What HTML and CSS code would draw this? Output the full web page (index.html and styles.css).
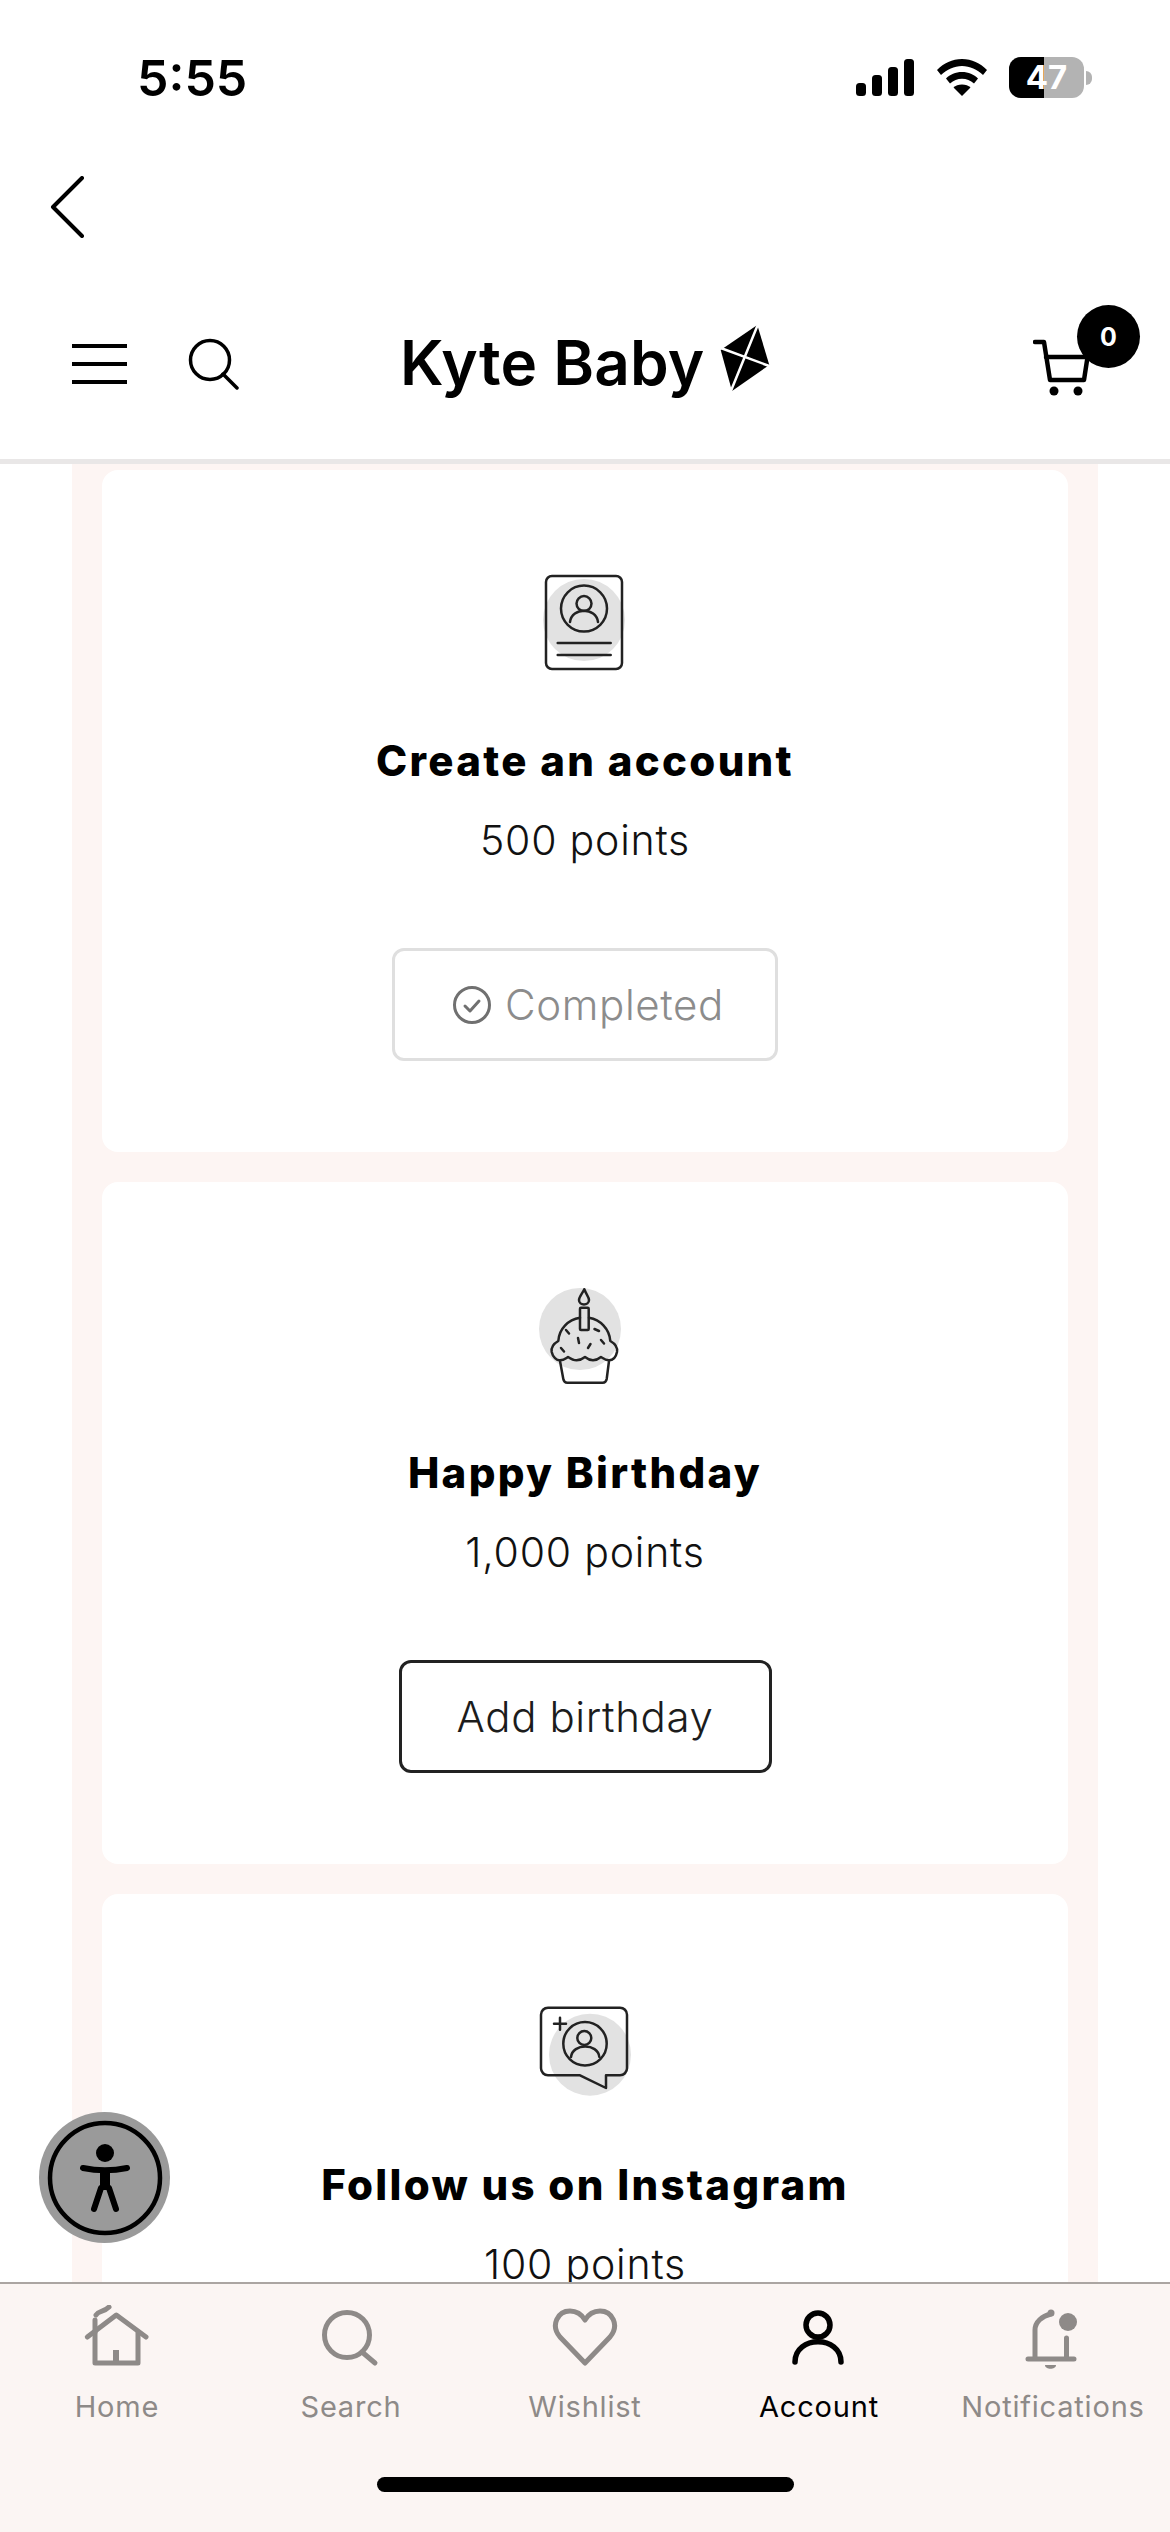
FILE: index.html
```html
<!DOCTYPE html>
<html lang="en">
<head>
<meta charset="utf-8">
<title>Kyte Baby rewards</title>
<link rel="stylesheet" href="styles.css">
</head>
<body>
<div class="phone">
  <div class="status">
    <span class="time">5:55</span>
    <div class="status-icons">
      <svg class="signal" viewBox="0 0 58 37"><rect x="0" y="24" width="10" height="13" rx="3.5"/><rect x="16" y="16" width="10" height="21" rx="3.5"/><rect x="32" y="8" width="10" height="29" rx="3.5"/><rect x="48" y="0" width="10" height="37" rx="3.5"/></svg>
      <svg class="wifi" viewBox="0 0 50 37"><path d="M25 0C15 0 7 4 0 11l4 5c6-5.500 13-9 21-9s15 3.500 21 9l4-5C43 4 35 0 25 0z"/><path d="M25 13c-6.500 0-12 2.500-16 6.500l4 5c3.500-3 7.500-4.800 12-4.800s8.500 1.800 12 4.800l4-5C37 15.500 31.500 13 25 13z"/><path d="M25 25.500c-3.500 0-6.500 1.200-8.500 3L25 37l8.500-8.500c-2-1.800-5-3-8.500-3z"/></svg>
      <div class="battery"><span class="battery-fill"></span><span class="battery-num">47</span></div>
      <span class="battery-tip"></span>
    </div>
  </div>
  <div class="back">
    <svg class="chevron" viewBox="0 0 36 62"><path d="M33 2L4 31l29 29"/></svg>
  </div>
  <header class="header">
    <div class="header-left">
      <div class="burger"><span></span><span></span><span></span></div>
      <svg class="h-search" viewBox="0 0 52 52"><circle cx="22" cy="22" r="19.500"/><path d="M35 36l14 14"/></svg>
    </div>
    <div class="logo">
      <span class="logo-text">Kyte Baby</span>
      <svg class="kite" viewBox="0 0 60 76"><path class="kite-body" d="M42.300 5L54.300 45 17 71 5.700 30z"/><path class="kite-cut" d="M43.500 3L15.500 72M3 27l54 20"/></svg>
    </div>
    <div class="cart">
      <svg class="cart-icon" viewBox="0 0 64 60"><path d="M2 5h9l6 38h34l4-26"/><circle cx="21" cy="54" r="4.500" class="solid"/><circle cx="45" cy="54" r="4.500" class="solid"/><path d="M13 20h42"/></svg>
      <span class="badge">0</span>
    </div>
  </header>

  <main class="content">
    <div class="strip">
      <section class="card">
        <svg class="task-icon" viewBox="0 0 120 104">
          <circle class="blob" cx="59" cy="50" r="41"/>
          <rect class="line" x="21" y="6" width="76" height="93" rx="6"/>
          <circle class="line" cx="59" cy="38.600" r="23"/>
          <circle class="line" cx="59" cy="33.600" r="7.500"/>
          <path class="line" d="M45 52C47 37 71 37 73 52"/>
          <path class="line" d="M32.700 73h53M32.700 85h53"/>
        </svg>
        <h2 class="title">Create an account</h2>
        <p class="points">500 points</p>
        <div class="btn btn-done">
          <svg class="check" viewBox="0 0 40 40"><circle cx="20" cy="20" r="17.500"/><path d="M13 21l5 5 9-10"/></svg>
          <span>Completed</span>
        </div>
      </section>

      <section class="card">
        <svg class="task-icon" viewBox="0 0 120 104">
          <circle class="blob" cx="55" cy="47" r="41"/>
          <path class="line" d="M59.300 7.300C57 12 54 15 54 18c0 6 10 6 10 0 0-3-3-6-4.700-10.700z"/>
          <rect class="line" x="55" y="25.700" width="8.700" height="22.300" rx="1"/>
          <path class="line" d="M55 35.700C43 37.500 34 47 33.300 59 28 62 26 66 26.700 70c1 5 5 8.500 8.300 8.300 4 0 6-2 8-3.300 3 2 5 3.300 8.500 3.300s6-1.300 8.500-3.300c2.500 2 5 3.300 8 3.300s5.500-1.300 8-3.300c2 1.300 4.500 3.300 8 3.300 4 0 7-3.500 8-8.300.7-4-1.300-8-6.700-11-.7-12-10-21.500-21.300-23.300"/>
          <path class="line" d="M35 79l3.300 18c.5 2.500 1.500 3.700 4 3.700h35.400c2.500 0 3.500-1.200 4-3.700L84 79"/>
          <path class="line" d="M41 48l3 3.500M69.500 47l4.500 2M53 56l1 5M36 66l3 3.500M63 66l2.500-4M76 58l3 3.500"/>
        </svg>
        <h2 class="title">Happy Birthday</h2>
        <p class="points">1,000 points</p>
        <div class="btn btn-add"><span>Add birthday</span></div>
      </section>

      <section class="card">
        <svg class="task-icon" viewBox="0 0 120 104">
          <circle class="blob" cx="65" cy="60.700" r="41"/>
          <path class="line" d="M23 13.700h72a7 7 0 0 1 7 7v53.600a7 7 0 0 1-7 7H81V94L55 81.300H23a7 7 0 0 1-7-7V20.700a7 7 0 0 1 7-7z"/>
          <circle class="line" cx="60" cy="49.700" r="21.700"/>
          <circle class="line" cx="59.300" cy="44" r="7"/>
          <path class="line" d="M46 63c1.500-14 27-14 28.300 0"/>
          <path class="line" d="M35 23.700v12M29 29.700h12"/>
        </svg>
        <h2 class="title">Follow us on Instagram</h2>
        <p class="points">100 points</p>
      </section>
    </div>
  </main>

  <nav class="tabbar">
    <div class="tabs">
      <div class="tab">
        <svg class="tab-icon" viewBox="0 0 70 64"><path d="M5.300 32L34.300 10 64 32"/><path d="M13 28v30h43V28"/><path d="M34 58V45" class="door"/><path d="M13 27V15"/><path d="M14 10c3-5 7-2 13-8"/></svg>
        <span>Home</span>
      </div>
      <div class="tab">
        <svg class="tab-icon" viewBox="0 0 70 64"><circle cx="31" cy="30" r="22.500"/><path d="M46 47l13 11"/></svg>
        <span>Search</span>
      </div>
      <div class="tab">
        <svg class="tab-icon" viewBox="0 0 70 64"><path d="M35 58L10 32C0 20 8 6 20 6c7 0 12 4 15 9 3-5 8-9 15-9 12 0 20 14 10 26z"/></svg>
        <span>Wishlist</span>
      </div>
      <div class="tab tab-active">
        <svg class="tab-icon" viewBox="0 0 70 64"><circle cx="34" cy="20" r="12"/><path d="M11 57C11 30 57 30 57 57"/></svg>
        <span>Account</span>
      </div>
      <div class="tab">
        <svg class="tab-icon" viewBox="0 0 70 64"><path d="M10 54h46M17 52V25c0-8 7-14 16-16M48.500 33v19"/><circle cx="33" cy="8" r="3.500" class="solid"/><circle cx="50" cy="17" r="9" class="solid"/><path d="M27 60h11c0 5-11 5-11 0z" class="solid"/></svg>
        <span>Notifications</span>
      </div>
    </div>
    <div class="home-indicator"></div>
  </nav>

  <button class="a11y" aria-label="Accessibility">
    <svg viewBox="0 0 131 131"><circle class="ring" cx="66" cy="66" r="55"/><circle class="fig" cx="66" cy="41" r="9"/><path class="limb" d="M44 56c14 3 30 3 44 0"/><path class="torso" d="M66 58v20"/><path class="limb" d="M62 76l-7 21M70 76l7 21"/></svg>
  </button>
</div>
</body>
</html>
```
FILE: styles.css
```css
* { box-sizing: border-box; }
html, body { margin: 0; padding: 0; background: #fff; }
.phone {
  position: relative;
  width: 1170px;
  height: 2532px;
  overflow: hidden;
  display: flex;
  flex-direction: column;
  font-family: "Inter", "Liberation Sans", sans-serif;
  color: #000;
}

/* status bar */
.status {
  height: 140px;
  padding: 50px 78px 0 137px;
  display: flex;
  justify-content: space-between;
  align-items: flex-start;
  flex-shrink: 0;
}
.time { font-size: 50px; line-height: 56px; font-weight: 600; letter-spacing: 0; }
.status-icons { display: flex; align-items: center; padding-top: 7px; }
.signal { width: 58px; height: 37px; fill: #000; margin-right: 23px; }
.wifi { width: 50px; height: 37px; fill: #000; margin-right: 22px; }
.battery {
  position: relative;
  width: 75px;
  height: 41px;
  border-radius: 12px;
  background: #b3b3b3;
  overflow: hidden;
  display: flex;
  align-items: center;
  justify-content: center;
}
.battery-fill { position: absolute; left: 0; top: 0; bottom: 0; width: 35px; background: #000; }
.battery-num { position: relative; color: #fff; font-size: 33px; font-weight: 700; line-height: 41px; }
.battery-tip { width: 6px; height: 14px; margin-left: 2px; background: #b3b3b3; border-radius: 0 7px 7px 0; }

/* back row */
.back { height: 145px; padding: 36px 0 0 49px; flex-shrink: 0; }
.chevron { display: block; width: 36px; height: 62px; fill: none; stroke: #000; stroke-width: 4; stroke-linecap: round; stroke-linejoin: round; }

/* site header */
.header {
  height: 179px;
  flex-shrink: 0;
  border-bottom: 5px solid #e9e7e7;
  display: flex;
  align-items: flex-start;
  position: relative;
}
.header-left { display: flex; align-items: center; padding: 53px 0 0 72px; width: 400px; flex-shrink: 0; }
.burger { width: 55px; height: 40px; display: flex; flex-direction: column; justify-content: space-between; margin-right: 61px; }
.burger span { display: block; height: 4px; background: #000; }
.h-search { width: 52px; height: 52px; fill: none; stroke: #000; stroke-width: 3.500; stroke-linecap: round; }
.logo { display: flex; align-items: flex-start; padding-top: 38px; }
.logo-text { font-size: 62px; line-height: 80px; font-weight: 600; letter-spacing: 0.2px; width: 315px; white-space: nowrap; }
.kite { width: 60px; height: 76px; margin-top: -3px; }
.kite-body { fill: #000; }
.kite-cut { fill: none; stroke: #fff; stroke-width: 2.500; }
.cart { margin-left: auto; position: relative; width: 107px; height: 100px; margin-right: 30px; margin-top: 20px; }
.cart-icon { position: absolute; left: 0; top: 32px; width: 64px; height: 60px; fill: none; stroke: #000; stroke-width: 4.500; stroke-linecap: round; stroke-linejoin: round; }
.cart-icon .solid { fill: #000; stroke: none; }
.badge {
  position: absolute;
  right: 0;
  top: 0;
  width: 63px;
  height: 63px;
  border-radius: 50%;
  background: #000;
  color: #fff;
  font-size: 25px;
  font-weight: 700;
  display: flex;
  align-items: center;
  justify-content: center;
}

/* scrolling content */
.content { flex: 1; min-height: 0; overflow: hidden; background: #fff; padding: 0 72px; }
.strip { background: #fdf5f3; padding: 6px 30px 0; display: flex; flex-direction: column; gap: 30px; }
.card {
  background: #fff;
  border-radius: 16px;
  height: 682px;
  flex-shrink: 0;
  padding-top: 100px;
  display: flex;
  flex-direction: column;
  align-items: center;
}
.task-icon { width: 120px; height: 104px; display: block; flex-shrink: 0; }
.blob { fill: #e2e2e2; }
.line { fill: none; stroke: #222; stroke-width: 2.500; stroke-linecap: round; stroke-linejoin: round; }
.title { margin: 60px 0 0; font-size: 42px; line-height: 54px; font-weight: 800; letter-spacing: 2.300px; color: #000; }
.points { margin: 26px 0 0; font-size: 41px; line-height: 52px; font-weight: 300; letter-spacing: 0.800px; color: #111; }
.btn {
  margin-top: 82px;
  height: 113px;
  border-radius: 12px;
  display: flex;
  align-items: center;
  justify-content: center;
  font-size: 42px;
  font-weight: 300;
  letter-spacing: 0.600px;
}
.btn-done { width: 386px; border: 3.500px solid #dfdfdf; color: #8c8c8c; padding-left: 6px; }
.btn-add { width: 373px; border: 3.500px solid #222; color: #1c1c1c; }
.check { width: 40px; height: 40px; margin-right: 13px; fill: none; stroke: #707070; stroke-width: 3; stroke-linecap: round; stroke-linejoin: round; }

/* bottom tab bar */
.tabbar { height: 250px; flex-shrink: 0; background: #fbf5f3; border-top: 2px solid #aba5a2; }
.tabs { display: flex; padding-top: 21px; }
.tab { width: 234px; display: flex; flex-direction: column; align-items: center; color: #8e8a88; font-size: 29px; line-height: 36px; letter-spacing: 0.800px; }
.tab-icon { width: 70px; height: 64px; display: block; margin-bottom: 20px; fill: none; stroke: #8e8a88; stroke-width: 5; stroke-linecap: round; stroke-linejoin: round; }
.tab-icon .solid { fill: #8e8a88; stroke: none; }
.tab-icon .door { stroke-width: 6; stroke-linecap: butt; }
.tab-active { color: #000; }
.tab-active .tab-icon { stroke: #000; stroke-width: 5.500; }
.home-indicator { width: 417px; height: 15px; border-radius: 8px; background: #000; margin: 0 auto; position: relative; top: 52px; }

/* accessibility widget */
.a11y { position: absolute; left: 39px; top: 2112px; width: 131px; height: 131px; padding: 0; border: 0; border-radius: 50%; background: #9a9a9a; }
.a11y svg { display: block; width: 131px; height: 131px; }
.ring { fill: none; stroke: #000; stroke-width: 4.500; }
.fig { fill: #000; }
.limb { fill: none; stroke: #000; stroke-width: 6; stroke-linecap: round; }
.torso { fill: none; stroke: #000; stroke-width: 10; }
```
